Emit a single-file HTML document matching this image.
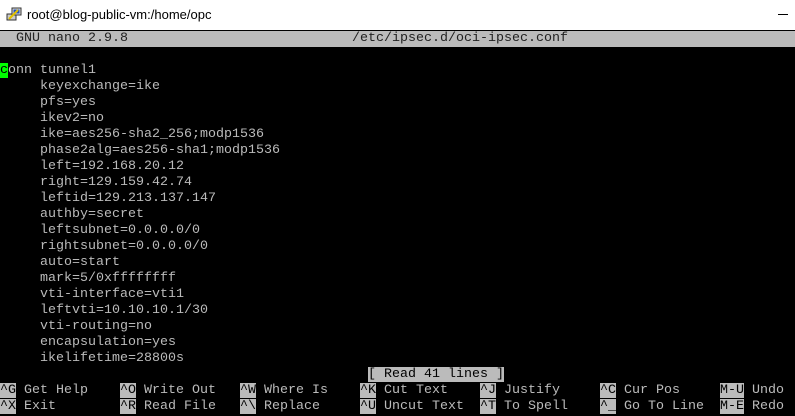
<!DOCTYPE html>
<html><head><meta charset="utf-8"><style>
*{margin:0;padding:0}
body{width:795px;height:416px;overflow:hidden;background:#000;position:relative;font-family:"Liberation Mono",monospace;font-size:13.33px}
#tb{position:absolute;left:0;top:0;width:795px;height:30px;background:#fff;border-bottom:1px solid #000;font-family:"Liberation Sans",sans-serif;font-size:13px;color:#000}
#tb span{position:absolute;left:27px;top:7px}
#min{position:absolute;left:778px;top:14px;width:10px;height:1px;background:#000}
.r{position:absolute;height:16px;line-height:16px;white-space:pre;color:#bbb}
#hd{position:absolute;left:0;top:31px;width:795px;height:16px;background:#bbb}
.k{background:#bbb;color:#000}
</style></head><body>
<div id="tb"><svg style="position:absolute;left:6px;top:6px" width="16" height="16" viewBox="0 0 16 16"><rect x="1" y="8" width="9" height="6" fill="#ccc" stroke="#333"/><rect x="6" y="2" width="9" height="7" fill="#ddd" stroke="#333"/><rect x="7.5" y="3.5" width="6" height="4" fill="#2050c0"/><path d="M3 13 L12 4" stroke="#e0c000" stroke-width="2"/></svg><span>root@blog-public-vm:/home/opc</span><div id="min"></div></div>
<div id="hd"></div>
<div class="r" style="top:31px;left:16px;color:#222">GNU nano 2.9.8</div>
<div class="r" style="top:31px;left:352px;color:#222">/etc/ipsec.d/oci-ipsec.conf</div>
<div class="r" style="top:63px;left:0"><span style="background:#0f0;color:#000">c</span>onn tunnel1</div>
<div class="r" style="top:79px;left:40px">keyexchange=ike</div>
<div class="r" style="top:95px;left:40px">pfs=yes</div>
<div class="r" style="top:111px;left:40px">ikev2=no</div>
<div class="r" style="top:127px;left:40px">ike=aes256-sha2_256;modp1536</div>
<div class="r" style="top:143px;left:40px">phase2alg=aes256-sha1;modp1536</div>
<div class="r" style="top:159px;left:40px">left=192.168.20.12</div>
<div class="r" style="top:175px;left:40px">right=129.159.42.74</div>
<div class="r" style="top:191px;left:40px">leftid=129.213.137.147</div>
<div class="r" style="top:207px;left:40px">authby=secret</div>
<div class="r" style="top:223px;left:40px">leftsubnet=0.0.0.0/0</div>
<div class="r" style="top:239px;left:40px">rightsubnet=0.0.0.0/0</div>
<div class="r" style="top:255px;left:40px">auto=start</div>
<div class="r" style="top:271px;left:40px">mark=5/0xffffffff</div>
<div class="r" style="top:287px;left:40px">vti-interface=vti1</div>
<div class="r" style="top:303px;left:40px">leftvti=10.10.10.1/30</div>
<div class="r" style="top:319px;left:40px">vti-routing=no</div>
<div class="r" style="top:335px;left:40px">encapsulation=yes</div>
<div class="r" style="top:351px;left:40px">ikelifetime=28800s</div>
<div class="r" style="top:367px;left:368px"><span class="k">[ Read 41 lines ]</span></div>
<div class="r" style="top:383px;left:0"><span class="k">^G</span> Get Help</div>
<div class="r" style="top:383px;left:120px"><span class="k">^O</span> Write Out</div>
<div class="r" style="top:383px;left:240px"><span class="k">^W</span> Where Is</div>
<div class="r" style="top:383px;left:360px"><span class="k">^K</span> Cut Text</div>
<div class="r" style="top:383px;left:480px"><span class="k">^J</span> Justify</div>
<div class="r" style="top:383px;left:600px"><span class="k">^C</span> Cur Pos</div>
<div class="r" style="top:383px;left:720px"><span class="k">M-U</span> Undo</div>
<div class="r" style="top:399px;left:0"><span class="k">^X</span> Exit</div>
<div class="r" style="top:399px;left:120px"><span class="k">^R</span> Read File</div>
<div class="r" style="top:399px;left:240px"><span class="k">^\</span> Replace</div>
<div class="r" style="top:399px;left:360px"><span class="k">^U</span> Uncut Text</div>
<div class="r" style="top:399px;left:480px"><span class="k">^T</span> To Spell</div>
<div class="r" style="top:399px;left:600px"><span class="k">^_</span> Go To Line</div>
<div class="r" style="top:399px;left:720px"><span class="k">M-E</span> Redo</div>
</body></html>
